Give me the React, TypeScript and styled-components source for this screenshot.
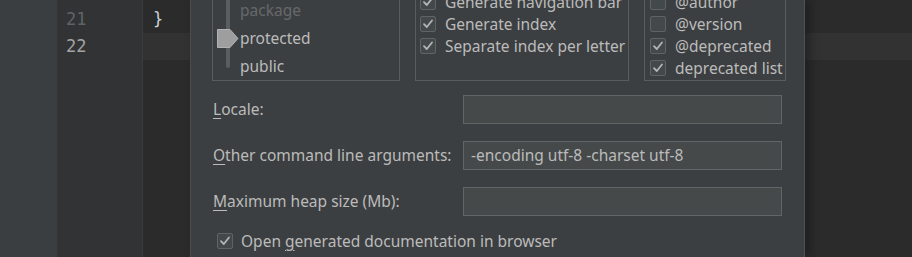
import React from "react";
import styled, { createGlobalStyle } from "styled-components";

const Global = createGlobalStyle`
  html, body { margin: 0; padding: 0; background: #2b2b2b; overflow: hidden; }
  #root { width: 912px; height: 257px; }
`;

const UI_FONT = `"Noto Sans", "Open Sans", sans-serif`;

const Screen = styled.div`
  display: flex;
  width: 912px;
  height: 257px;
  overflow: hidden;
  background: #2b2b2b;
`;

const SideStrip = styled.div`
  width: 58px;
  flex: none;
  background: #3b3e40;
  border-right: 1px solid #333537;
  box-sizing: border-box;
`;

const Gutter = styled.div`
  width: 85px;
  flex: none;
  background: #313335;
  border-right: 1px solid #3a3c3e;
  box-sizing: border-box;
  padding-top: 6px;
  padding-left: 8px;
`;

const LineNo = styled.div<{ $current?: boolean }>`
  height: 27px;
  line-height: 27px;
  font-family: "DejaVu Sans Mono", monospace;
  font-size: 17px;
  color: ${(p) => (p.$current ? "#a4a3a3" : "#606366")};
`;

const Editor = styled.div`
  position: relative;
  flex: 1;
  padding-top: 6px;
`;

const CodeLine = styled.div<{ $current?: boolean }>`
  height: 27px;
  line-height: 27px;
  padding-left: 10px;
  font-family: "DejaVu Sans Mono", monospace;
  font-size: 17px;
  color: #c6d0d9;
  background: ${(p) => (p.$current ? "#323232" : "transparent")};
`;

const Dialog = styled.div`
  position: absolute;
  left: 47px;
  top: 0;
  bottom: 0;
  width: 615px;
  box-sizing: border-box;
  background: #3c3f41;
  border-left: 1px solid #4a4d4f;
  border-right: 1px solid #4f5254;
  box-shadow: 5px 0 10px rgba(0, 0, 0, 0.3);
  padding-left: 21px;
  font-family: ${UI_FONT};
  font-size: 15.5px;
  color: #bbbbbb;
`;

const PanelsRow = styled.div`
  display: flex;
  gap: 15px;
  height: 81px;
`;

const Panel = styled.div<{ $w: number; $pb: number; $pl: number }>`
  width: ${(p) => p.$w}px;
  height: 81px;
  box-sizing: border-box;
  border: 1px solid #5a5d5f;
  border-top: none;
  overflow: hidden;
  display: flex;
  flex-direction: column;
  justify-content: flex-end;
  padding-bottom: ${(p) => p.$pb}px;
  padding-left: ${(p) => p.$pl}px;
`;

const SliderPanel = styled(Panel)`
  flex-direction: row;
  justify-content: flex-start;
  align-items: flex-end;
`;

const SliderColumn = styled.div`
  position: relative;
  width: 27px;
  height: 80px;
  flex: none;
`;

const Track = styled.div`
  margin-left: 13px;
  width: 4px;
  height: 68px;
  background: #5b5e60;
  border-radius: 0 0 2px 2px;
`;

const Thumb = styled.svg`
  position: absolute;
  left: 4px;
  top: 29px;
`;

const LevelList = styled.div`
  display: flex;
  flex-direction: column;
  justify-content: flex-end;
  height: 80px;
`;

const Level = styled.div<{ $disabled?: boolean }>`
  height: 28px;
  line-height: 28px;
  flex: none;
  color: ${(p) => (p.$disabled ? "#66696b" : "#bbbbbb")};
`;

const CheckRow = styled.label<{ $gap?: number; $h?: number }>`
  display: flex;
  align-items: center;
  gap: ${(p) => p.$gap ?? 9}px;
  height: ${(p) => p.$h ?? 22}px;
  flex: none;
  white-space: nowrap;
`;

const Box = styled.span`
  width: 16px;
  height: 16px;
  box-sizing: border-box;
  flex: none;
  border: 1px solid #5f6365;
  border-radius: 2px;
  background: #43494a;
  display: flex;
  align-items: center;
  justify-content: center;
`;

const Check = ({ on }: { on?: boolean }) => (
  <Box>
    {on && (
      <svg width="12" height="12" viewBox="0 0 12 12">
        <path d="M2 6.2 L4.8 9 L10 2.5" fill="none" stroke="#b4b4b4" strokeWidth="1.8" strokeLinecap="round" strokeLinejoin="round" />
      </svg>
    )}
  </Box>
);

const Form = styled.div`
  display: grid;
  grid-template-columns: 250px 319px;
  grid-auto-rows: 29px;
  row-gap: 17px;
  margin-top: 14px;
  padding-left: 1px;
  align-items: center;
`;

const FieldLabel = styled.span`
  white-space: nowrap;
  margin-top: -1px;
`;

const Mn = styled.span`
  text-decoration: underline;
  text-underline-offset: 3px;
`;

const Input = styled.div`
  height: 29px;
  box-sizing: border-box;
  background: #45494a;
  border: 1px solid #626567;
  padding-left: 7px;
  line-height: 27px;
  color: #bbbbbb;
  white-space: nowrap;
`;

const BottomCheck = styled.div`
  margin-top: 17px;
  padding-left: 5px;
`;

export default function App() {
  return (
    <>
      <Global />
      <Screen>
        <SideStrip />
        <Gutter>
          <LineNo>21</LineNo>
          <LineNo $current>22</LineNo>
        </Gutter>
        <Editor>
          <CodeLine>{"}"}</CodeLine>
          <CodeLine $current />
          <Dialog>
            <PanelsRow>
              <SliderPanel $w={188} $pb={0} $pl={0}>
                <SliderColumn>
                  <Track />
                  <Thumb width="22" height="19" viewBox="0 0 22 19">
                    <polygon points="0.5,0.5 13,0.5 21,9.5 13,18.5 0.5,18.5" fill="#9e9e9e" stroke="#b3b3b3" />
                  </Thumb>
                </SliderColumn>
                <LevelList>
                  <Level $disabled>package</Level>
                  <Level>protected</Level>
                  <Level>public</Level>
                </LevelList>
              </SliderPanel>
              <Panel $w={214} $pb={23} $pl={4}>
                <CheckRow><Check on /><span>Generate hierarchy tree</span></CheckRow>
                <CheckRow><Check on /><span>Generate navigation bar</span></CheckRow>
                <CheckRow><Check on /><span>Generate index</span></CheckRow>
                <CheckRow><Check on /><span>Separate index per letter</span></CheckRow>
              </Panel>
              <Panel $w={142} $pb={1} $pl={5}>
                <CheckRow><Check on /><span>@use</span></CheckRow>
                <CheckRow><Check /><span>@author</span></CheckRow>
                <CheckRow><Check /><span>@version</span></CheckRow>
                <CheckRow><Check on /><span>@deprecated</span></CheckRow>
                <CheckRow><Check on /><span>deprecated list</span></CheckRow>
              </Panel>
            </PanelsRow>
            <Form>
              <FieldLabel><Mn>L</Mn>ocale:</FieldLabel>
              <Input />
              <FieldLabel><Mn>O</Mn>ther command line arguments:</FieldLabel>
              <Input>-encoding utf-8 -charset utf-8</Input>
              <FieldLabel><Mn>M</Mn>aximum heap size (Mb):</FieldLabel>
              <Input />
            </Form>
            <BottomCheck>
              <CheckRow $gap={8} $h={16}>
                <Check on />
                <span>Open <Mn>g</Mn>enerated documentation in browser</span>
              </CheckRow>
            </BottomCheck>
          </Dialog>
        </Editor>
      </Screen>
    </>
  );
}
